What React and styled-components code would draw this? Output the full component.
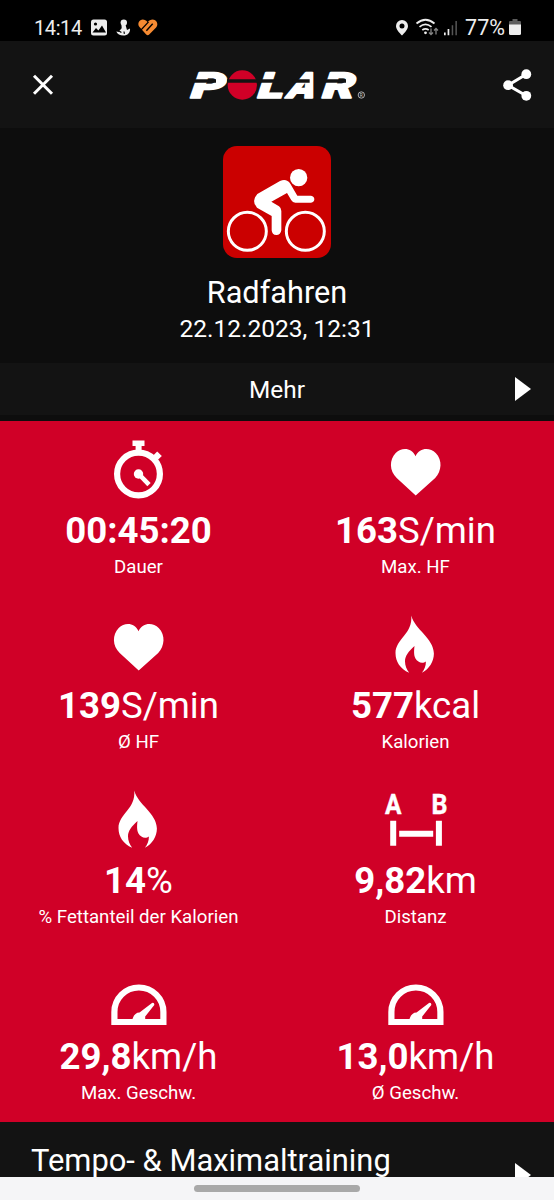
import React from "react";
import styled, { createGlobalStyle } from "styled-components";

const GlobalStyle = createGlobalStyle`
  * { box-sizing: border-box; }
  html, body { margin: 0; padding: 0; background: #0d0d0d; }
  body { font-family: Roboto, "Liberation Sans", sans-serif; color: #fff; }
  svg { display: block; flex: none; }
`;

const Screen = styled.div`
  width: 554px;
  height: 1200px;
  display: flex;
  flex-direction: column;
  overflow: hidden;
  background: #0d0d0d;
`;

const StatusBar = styled.div`
  height: 41px;
  flex: none;
  display: flex;
  justify-content: space-between;
  align-items: center;
  padding: 14px 33px 0 34px;
  background: #000;
  color: #ededed;
`;

const StatusGroup = styled.div`
  display: flex;
  align-items: center;
  gap: ${(p) => p.$gap || 0}px;
`;

const StatusText = styled.span`
  font-size: ${(p) => p.$size || 20}px;
  line-height: 28px;
  letter-spacing: ${(p) => p.$spacing || 0}px;
`;

const Header = styled.header`
  height: 87px;
  flex: none;
  display: flex;
  align-items: center;
  justify-content: space-between;
  padding: 0 21px 0 31px;
  background: #131313;
`;

const IconButton = styled.button`
  border: 0;
  padding: 0;
  background: none;
  color: #fff;
  display: flex;
`;

const Activity = styled.section`
  height: 235px;
  flex: none;
  display: flex;
  flex-direction: column;
  align-items: center;
  padding-top: 18px;
`;

const SportBadge = styled.div`
  width: 108px;
  height: 112px;
  border-radius: 14px;
  background: #cb0000;
  overflow: hidden;
`;

const Title = styled.h1`
  margin: 16px 0 0;
  font-weight: 400;
  font-size: 30.7px;
  line-height: 38px;
`;

const DateText = styled.div`
  font-size: 24.5px;
  line-height: 34px;
`;

const MoreRow = styled.div`
  height: 52px;
  flex: none;
  display: grid;
  grid-template-columns: 60px 1fr 60px;
  align-items: center;
  margin-bottom: 5.5px;
  background: #131313;
`;

const MoreLabel = styled.span`
  grid-column: 2;
  text-align: center;
  font-size: 24.4px;
  line-height: 30px;
  padding-top: 2px;
`;

const Stats = styled.section`
  height: 701.5px;
  flex: none;
  display: grid;
  grid-template-columns: 1fr 1fr;
  grid-template-rows: repeat(4, 175.4px);
  background: #d00027;
`;

const Stat = styled.div`
  display: flex;
  flex-direction: column;
  align-items: center;
`;

const StatValue = styled.div`
  margin-top: 8px;
  font-size: 36.6px;
  line-height: 44px;
  white-space: nowrap;
  b { font-weight: 700; }
`;

const StatLabel = styled.div`
  margin-top: 2px;
  font-size: 18.65px;
  line-height: 24px;
  white-space: nowrap;
`;

const TrainingRow = styled.div`
  height: 55px;
  flex: none;
  display: flex;
  justify-content: space-between;
  align-items: flex-start;
  padding: 20px 23px 0 31px;
  overflow: hidden;
  background: #131313;
`;

const TrainingTitle = styled.h2`
  margin: 0;
  font-weight: 400;
  font-size: 30.9px;
  line-height: 38px;
  white-space: nowrap;
`;

const ArrowSlot = styled.span`
  display: flex;
  justify-content: flex-end;
  padding-top: ${(p) => p.$top || 0}px;
  padding-right: ${(p) => p.$right || 0}px;
`;

const NavBar = styled.div`
  height: 23px;
  flex: none;
  display: flex;
  justify-content: center;
  padding-top: 8px;
  background: #f5f5f7;
`;

const NavHandle = styled.div`
  width: 166px;
  height: 7px;
  border-radius: 4px;
  background: #a9a9a9;
`;

const Arrow = () => (
  <svg width="16" height="24" viewBox="0 0 16 24" fill="#fff">
    <path d="M0 0 16 12 0 24z" />
  </svg>
);

const Notifications = () => (
  <svg width="68" height="20" viewBox="0 0 68 20">
    <rect x="1" y="1.5" width="16" height="16" rx="2.5" fill="#ededed" />
    <circle cx="5.5" cy="6" r="1.6" fill="#000" />
    <path d="M2.5 14.5 6 10l2.4 2.5L12 7.5l4 7z" fill="#000" />
    <circle cx="33.8" cy="4.6" r="3.2" fill="#ededed" />
    <path d="M31.5 7h4l1.5 5 3-1.6c.5 4-2.400 7.100-6.500 7.100-3.500 0-6.200-1.200-7.200-4l2.500.4c.8-1.500 2-2.400 2.900-3.600z" fill="#ededed" />
    <path d="m29 13 2.400 1.600m2.600-1.100.4 2.400" stroke="#000" strokeWidth="1.200" />
    <path d="M49.300 8.800C47 6 49 1.600 52.600 1.500c2 0 3.700 1 5 2.700 1.400-1.700 3-2.700 5.200-2.700 4 .1 6 4.800 3.300 8l-6.900 7q-1.500 1.300-3 0z" fill="#f58a32" />
    <path d="m58.500 3.900-8.300 9M62.700 5.700l-6.300 7.100" stroke="#000" strokeWidth="1.400" />
  </svg>
);

const Signals = () => (
  <svg width="66" height="22" viewBox="0 0 66 22">
    <path fillRule="evenodd" fill="#ededed" d="M7 3a6 6 0 0 1 6 6c0 3.300-3.300 6.700-6 9.500C4.300 15.700 1 12.300 1 9a6 6 0 0 1 6-6zm0 3.400a2.500 2.500 0 1 0 0 5 2.500 2.500 0 0 0 0-5z" />
    <g fill="none" stroke="#ededed" strokeWidth="1.700">
      <path d="M21.500 6.500q9-7.500 18 0M24.500 9.800q6-4.800 12 0M27.300 13q3.200-2.400 6.400 0" />
    </g>
    <circle cx="30.500" cy="15.800" r="1.400" fill="#ededed" />
    <g fill="none" stroke="#858585" strokeWidth="1.300">
      <path d="M36 11.500v6m-2-2 2 2 2-2M41 17.500v-6m-2 2 2-2 2 2" />
    </g>
    <g fill="#ededed">
      <path d="M49 15.500h1.700v2.800H49zM52.600 12h1.700v6.300h-1.700z" />
      <path fill="#555" d="M56.700 8.200h1.500v10.100h-1.500zM60.400 4h1.500v14.300h-1.500z" />
    </g>
  </svg>
);

const Battery = () => (
  <svg width="12" height="17" viewBox="0 0 12 17">
    <path fill="#5c5c5c" d="M3.500 0h5v2H11q1 0 1 1v3H0V3q0-1 1-1h2.500z" />
    <path fill="#ededed" d="M0 5.500h12v9q0 1.500-1.500 1.500h-9Q0 16 0 14.500z" />
  </svg>
);

const Close = () => (
  <svg width="24" height="24" viewBox="0 0 24 24">
    <path d="m3 2.800 18 18M21 2.800l-18 18" stroke="#fff" strokeWidth="3" />
  </svg>
);

const Share = () => (
  <svg width="30" height="32" viewBox="0 0 30 32">
    <path d="M23.300 5.200 5.100 16.200l18.200 10.600" fill="none" stroke="#fff" strokeWidth="3" />
    <g fill="#fff"><circle cx="23.300" cy="5.200" r="4.900" /><circle cx="5.100" cy="16.200" r="4.900" /><circle cx="23.300" cy="26.800" r="4.900" /></g>
  </svg>
);

const LogoText = styled.text`
  font-family: Roboto, sans-serif;
  font-size: 107px;
  font-style: italic;
  font-weight: 900;
  fill: #fff;
  stroke: #fff;
  stroke-width: 5px;
  stroke-linejoin: round;
`;

const Logo = () => (
  <svg width="200" height="50" viewBox="-5 -1 600 150" aria-label="Polar">
    <LogoText transform="translate(30 112) skewX(-5) scale(1.5 1)">P</LogoText>
    <circle cx="185" cy="74" r="44" fill="#d00027" />
    <LogoText transform="translate(231 112) skewX(-5) scale(1.38 1)">L</LogoText>
    <LogoText transform="translate(320 112) skewX(-12) scale(1.15 1)">A</LogoText>
    <LogoText transform="translate(425 112) skewX(-5) scale(1.42 1)">R</LogoText>
    <path d="M35 57h71v10H35zM139 57h154v10H139zM335 57h52v10h-52zM430 57h66v10h-66z" fill="#131313" />
    <circle cx="542" cy="104" r="9.500" fill="none" stroke="#ccc" strokeWidth="2.500" />
    <text x="537" y="109" fontSize="14" fontFamily="Roboto" fill="#ccc">R</text>
  </svg>
);

const Cyclist = () => (
  <svg width="108" height="112" viewBox="39 33 324 336">
    <g fill="none" stroke="#fff" strokeWidth="9">
      <circle cx="112" cy="289" r="57" />
      <circle cx="286" cy="289" r="57" />
    </g>
    <circle cx="266" cy="128" r="26" fill="#fff" />
    <path fill="#fff" d="M142 177 210 138q20-8 31 8l21 36h41q10 2 10 11t-10 10h-47q-8 0-12-7l-13-22-47 26 23 14q7 5 7 14v58q-2 14-15 14t-14-14v-43l-44-25q-18-20 1-41z" />
  </svg>
);

const shapes = {
  clock: (
    <>
      <circle cx="40.300" cy="53" r="21.400" fill="none" stroke="#fff" strokeWidth="6.200" />
      <path d="M34.300 19.500h12v5.600H43.400v6h-6v-6h-3.100z" />
      <path d="m59 30.500 4.600 4.500-6.100 6-4.500-4.500z" />
      <circle cx="40.300" cy="53" r="4.700" />
      <path d="m41 53.500 9.800 10.200" stroke="#fff" strokeWidth="4.600" />
    </>
  ),
  heart: <path d="M40.300 35.200C44.500 26 55 26.500 60.500 32c7 7 6 18-.5 25L40.500 74.500 21.500 57C14 49.500 14 39 20.500 32c6-6 16-5.500 19.800 3.200z" />,
  flame: <path d="M36 19.400c3.500 13.800 22.700 23 22.700 38 0 8.500-5 15.500-12 19.400 2.600-3.600 4-6.800 4-11.400-2 1.600-5 1.900-7.500.1-4.800-3-4.700-8.700-3.900-15.500-6 5.500-9.500 10-9.500 15.300 0 4.700 1.700 8.200 4.200 11.500-9-4.100-13.700-11.300-13.700-19.900C20.300 43 38 37.500 36 19.400z" />,
  distance: (
    <>
      <path d="M15 49.700h6v25h-6zM60.700 49.700h6v25h-6zM24 59.700h34v6H24z" />
      <text transform="translate(9.700 43.400) scale(.86 1)" fontSize="28.500" fontWeight="700" stroke="#fff" strokeWidth=".4">A</text>
      <text transform="translate(56.400 43.400) scale(.88 1)" fontSize="28.500" fontWeight="700" stroke="#fff" strokeWidth=".4">B</text>
    </>
  ),
  gauge: (
    <>
      <path d="M16.200 75V65a24.500 24.500 0 0 1 49 0v10z" fill="none" stroke="#fff" strokeWidth="6.200" />
      <path d="M34.300 73v-1q2-6.500 7-6.500l12.500-9.500q2.500-.7 2.300 2L47 69.500V73z" />
    </>
  ),
};

const StatIcon = ({ name }) => (
  <svg width="80" height="80" viewBox="0.8 0 80 80" fill="#fff">{shapes[name]}</svg>
);

const stats = [
  ["clock", "00:45:20", "", "Dauer"],
  ["heart", "163", "S/min", "Max. HF"],
  ["heart", "139", "S/min", "Ø HF"],
  ["flame", "577", "kcal", "Kalorien"],
  ["flame", "14", "%", "% Fettanteil der Kalorien"],
  ["distance", "9,82", "km", "Distanz"],
  ["gauge", "29,8", "km/h", "Max. Geschw."],
  ["gauge", "13,0", "km/h", "Ø Geschw."],
];

export default function App() {
  return (
    <>
      <GlobalStyle />
      <Screen>
        <StatusBar>
          <StatusGroup $gap={8}>
            <StatusText $spacing={-0.4}>14:14</StatusText>
            <Notifications />
          </StatusGroup>
          <StatusGroup $gap={4}>
            <Signals />
            <StatusText $size={21.5}>77%</StatusText>
            <Battery />
          </StatusGroup>
        </StatusBar>
        <Header>
          <IconButton aria-label="Close"><Close /></IconButton>
          <Logo />
          <IconButton aria-label="Share"><Share /></IconButton>
        </Header>
        <Activity>
          <SportBadge><Cyclist /></SportBadge>
          <Title>Radfahren</Title>
          <DateText>22.12.2023, 12:31</DateText>
        </Activity>
        <MoreRow>
          <MoreLabel>Mehr</MoreLabel>
          <ArrowSlot $right={23}><Arrow /></ArrowSlot>
        </MoreRow>
        <Stats>
          {stats.map(([icon, value, unit, label]) => (
            <Stat key={label}>
              <StatIcon name={icon} />
              <StatValue><b>{value}</b>{unit}</StatValue>
              <StatLabel>{label}</StatLabel>
            </Stat>
          ))}
        </Stats>
        <TrainingRow>
          <TrainingTitle>Tempo- &amp; Maximaltraining</TrainingTitle>
          <ArrowSlot $top={20.5}><Arrow /></ArrowSlot>
        </TrainingRow>
        <NavBar><NavHandle /></NavBar>
      </Screen>
    </>
  );
}
